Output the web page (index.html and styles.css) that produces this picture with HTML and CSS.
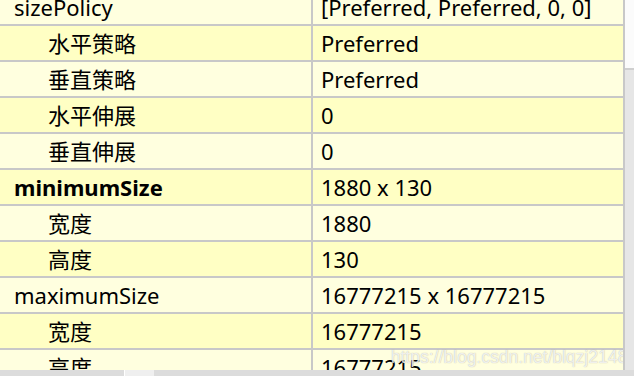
FILE: index.html
```html
<!DOCTYPE html>
<html>
  <head>
    <meta charset="utf-8" />
    <title>属性编辑器</title>

    <link rel="stylesheet" href="styles.css">
  </head>

  <body>
    <div class="editor">
      <div class="main">
        <div class="table">
          <div class="rows">
            <div class="row light">
              <div class="name">sizePolicy</div>
              <div class="value">[Preferred, Preferred, 0, 0]</div>
            </div>
            <div class="row dark">
              <div class="name child">水平策略</div>
              <div class="value">Preferred</div>
            </div>
            <div class="row light">
              <div class="name child">垂直策略</div>
              <div class="value">Preferred</div>
            </div>
            <div class="row dark">
              <div class="name child">水平伸展</div>
              <div class="value">0</div>
            </div>
            <div class="row light">
              <div class="name child">垂直伸展</div>
              <div class="value">0</div>
            </div>
            <div class="row dark">
              <div class="name changed">minimumSize</div>
              <div class="value">1880 x 130</div>
            </div>
            <div class="row light">
              <div class="name child">宽度</div>
              <div class="value">1880</div>
            </div>
            <div class="row dark">
              <div class="name child">高度</div>
              <div class="value">130</div>
            </div>
            <div class="row light">
              <div class="name">maximumSize</div>
              <div class="value">16777215 x 16777215</div>
            </div>
            <div class="row dark">
              <div class="name child">宽度</div>
              <div class="value">16777215</div>
            </div>
            <div class="row light">
              <div class="name child">高度</div>
              <div class="value">16777215</div>
            </div>
          </div>
          <div class="watermark">https://blog.csdn.net/blqzj214817</div>
        </div>
        <div class="vscroll">
          <div class="vthumb"></div>
        </div>
      </div>
      <div class="hscroll">
        <div class="hthumb"></div>
      </div>
    </div>
  </body>
</html>
```

FILE: styles.css
```css
* {
  margin: 0;
  padding: 0;
  box-sizing: border-box;
}
body {
  width: 634px;
  height: 376px;
  overflow: hidden;
  background: #f0f0f0;
  font-family: "Noto Sans", "Noto Sans CJK SC", sans-serif;
  font-size: 22px;
  color: #000;
}
.editor {
  display: flex;
  flex-direction: column;
  height: 376px;
}
.main {
  display: flex;
  height: 370px;
}
.table {
  position: relative;
  width: 625px;
  height: 370px;
  overflow: hidden;
  border-right: 2px solid #c8c8c8;
}
.rows {
  margin-top: -10px;
}
.row {
  display: flex;
  height: 36px;
  border-bottom: 2px solid #c8c8c8;
}
.light {
  background: #ffffdf;
}
.dark {
  background: #ffffc4;
}
.name {
  width: 313px;
  flex-shrink: 0;
  border-right: 2px solid #c8c8c8;
  padding-left: 14px;
  padding-top: 1px;
  line-height: 32px;
  white-space: nowrap;
}
.name.child {
  padding-left: 48px;
}
.name.changed {
  font-weight: 700;
}
.value {
  padding-left: 8px;
  padding-top: 1px;
  line-height: 32px;
  white-space: nowrap;
}
.watermark {
  position: absolute;
  left: 391px;
  top: 347px;
  font-family: "Liberation Sans", sans-serif;
  font-size: 17.5px;
  color: rgba(255, 255, 255, 0.8);
  text-shadow: 0 0 1px rgba(110, 110, 110, 0.55);
  white-space: nowrap;
}
.vscroll {
  flex: 1;
  background: #e6e6e6;
}
.vthumb {
  height: 70px;
  background: #fbfbfb;
  border-bottom: 2px solid #cfcfcf;
}
.hscroll {
  height: 6px;
  background: #dcdcdc;
  padding-left: 124px;
}
.hthumb {
  width: 30px;
  height: 6px;
  background: #efefef;
  border-left: 1px solid #fff;
}
```
